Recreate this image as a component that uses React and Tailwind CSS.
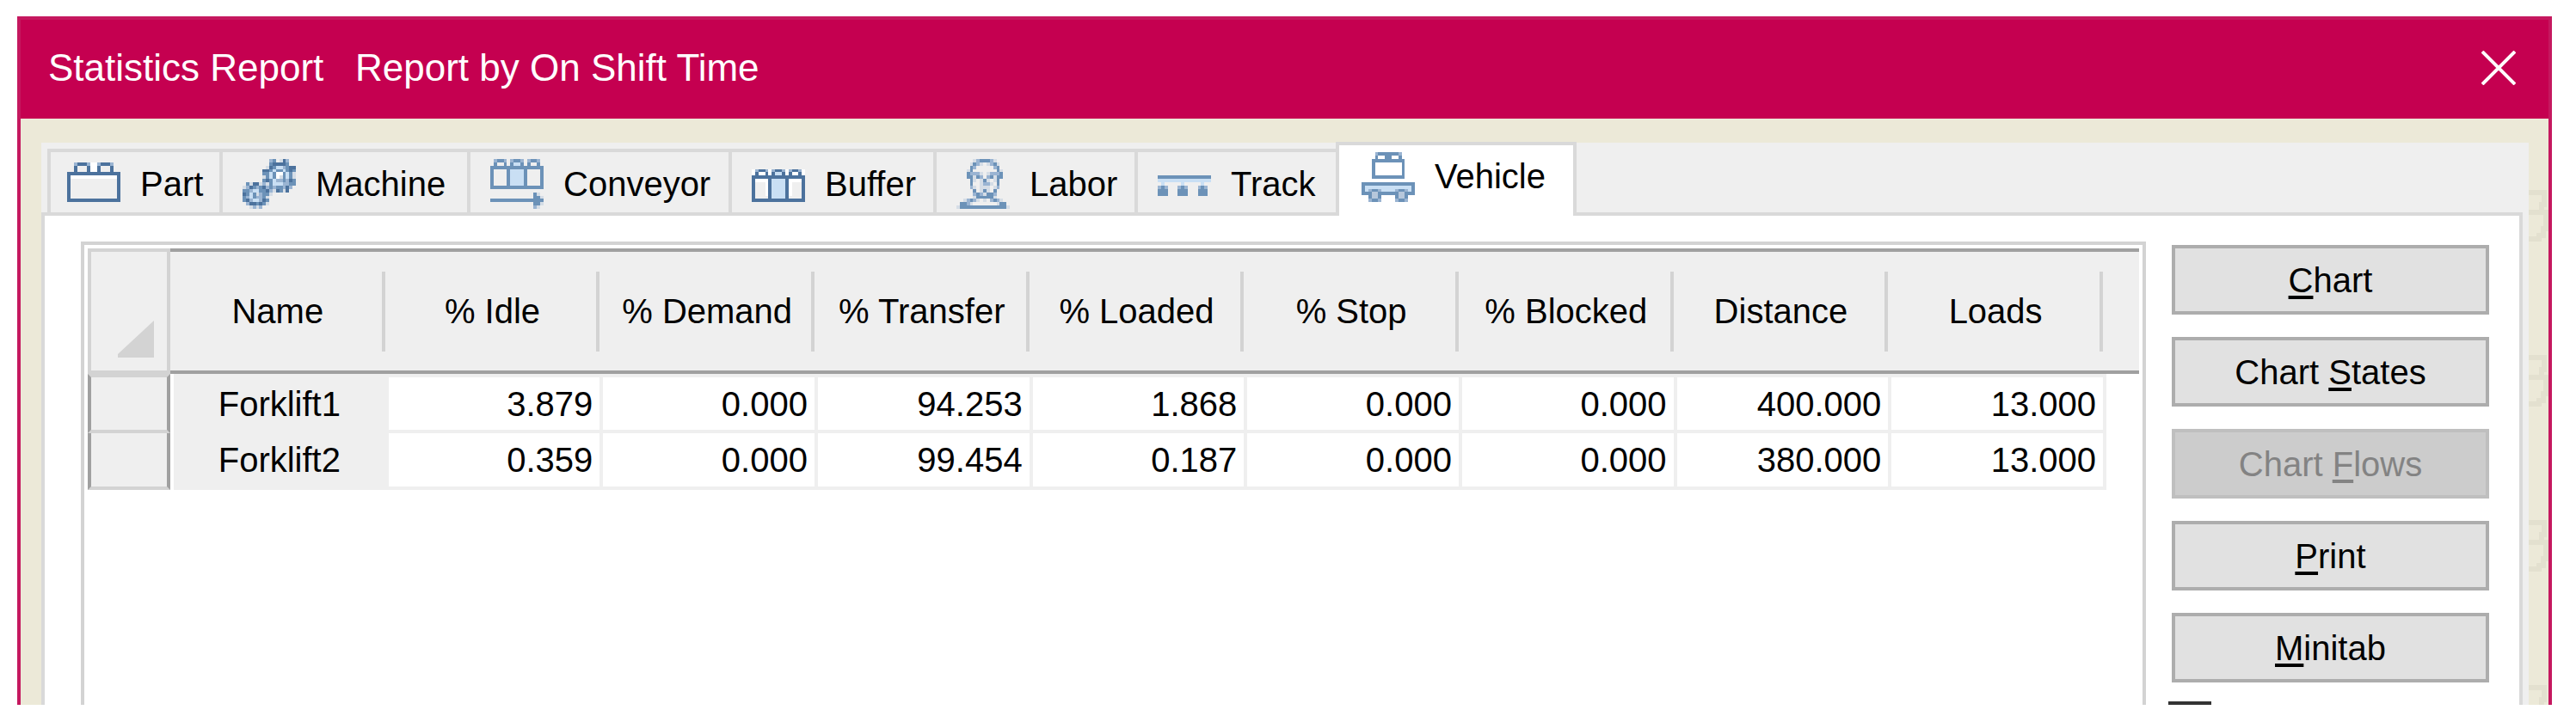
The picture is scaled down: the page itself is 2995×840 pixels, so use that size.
import React from "react"

const palette = {
  D: "#4c729d",
  M: "#6c92b8",
  B: "#9ab4d2",
  L: "#c9dff4",
  G: "#b6c7db",
  g: "#d5dde6",
  W: "#ffffff",
}

// 16 columns each, one letter per pixel
const icons = {
  part: [
    "",
    "..BDDDBWWBDDDB..",
    "..D...DWWD...D..",
    "..D...DWWD...D..",
    "DDDDDDDDDDDDDDDD",
    "DWWWWWWWWWWWWWWD",
    "D..............D",
    "D..............D",
    "D..............D",
    "D..............D",
    "D..............D",
    "D..............D",
    "DDDDDDDDDDDDDDDD",
  ],
  machine: [
    "........BM.gDB..",
    "........MDDDDM..",
    ".......gDMLLBMDD",
    "......DDMLMMLMDM",
    "......MMLMWWMLMg",
    "......gMLMWgMLMg",
    "......MDMLBBMBDM",
    ".MgDDgBgMLLLBBMM",
    "gBDMBMDBMBMMBDB.",
    "MMBLLMMDBgDMgD..",
    "DMLMgBMMg.......",
    "MBLMBBMg........",
    "MDBLLBDM........",
    ".BDDMDMg........",
    "..gBgB..........",
  ],
  conveyor: [
    ".BMMB.BMMB.BMMB.",
    ".M..M.MLLM.M..M.",
    "MMMMMMMMMMMMMMMM",
    "M....MLLLLM....M",
    "M....MLLLLM....M",
    "M....MLLLLM....M",
    "M....MLLLLM....M",
    "M....MLLLLM....M",
    "MMMMMMMMMMMMMMMM",
    "",
    ".............Mg.",
    ".............MMg",
    "MMMMMMMMMMMMMMMM",
    ".............MMg",
    ".............Bg.",
  ],
  buffer: [
    "",
    "",
    "",
    "WBDDBWBDDBWBDDBW",
    "WDWWDWDLLDWDWWDW",
    "DDDDDDDDDDDDDDDD",
    "DWWWWDLLLLDWWWWD",
    "D...WDLLLLDW...D",
    "D...WDLLLLDW...D",
    "D...WDLLLLDW...D",
    "D...WDLLLLDW...D",
    "D....DLLLLD....D",
    "DDDDDDDDDDDDDDDD",
  ],
  labor: [
    ".....gBMMMBg....",
    "....gMBg.gBMg...",
    "....MB.....BM...",
    "...gM.......Mg..",
    "...MBBBg.gBBBM..",
    "...MMgMB.BMgMM..",
    "....Mg.gMg.gM...",
    "....M..gBBg.M...",
    "....Bg.ggg.gB...",
    ".....M.gMg.M....",
    ".....BMBgMMB....",
    ".....gMMMMMg....",
    "..gBMBg.g.BMBg..",
    ".MMBg.......gMM.",
    "gMMMMMMMMMMMMMMg",
  ],
  track: [
    "",
    "",
    "",
    "",
    "",
    "MMMMMMMMMMMMMMMM",
    "LLLLLLLLLLLLLLLL",
    ".L.....L.....L..",
    "BMB...BMB...BMB.",
    "MMM...MMM...MMM.",
    "MMM...MMM...MMM.",
  ],
  vehicle: [
    "....BMMMMMMB....",
    "....MWWMMWWM....",
    "...MMMMMMMMMM...",
    "...MWWWWWWWWM...",
    "...MWWWWWWWWM...",
    "...MWWWWWWWWM...",
    "...MWWWWWWWWM...",
    "...MMMMMMMMMM...",
    "",
    "MMMMMMMMMMMMMMMM",
    "MLLLLLLLLLLLLLLM",
    "MLBMMBLLLLBMMBLM",
    "MMMGGMMMMMMGGMMM",
    "..MGGM....MGGM..",
    "..BMMB....BMMB..",
  ],
}

const PixelIcon = ({ name }) => (
  <svg width="62" height="58" viewBox="0 0 16 15" preserveAspectRatio="none" shapeRendering="crispEdges" className="shrink-0" aria-hidden="true">
    {icons[name].map((row, y) =>
      row.split("").map((c, x) => (c === "." ? null : <rect key={`${x}-${y}`} x={x} y={y} width="1" height="1" fill={palette[c]} />))
    )}
  </svg>
)

const tabs = [
  { icon: "part", label: "Part", className: "w-[200px] pl-[19px]" },
  { icon: "machine", label: "Machine", className: "w-[288px] pl-[23px]" },
  { icon: "conveyor", label: "Conveyor", className: "w-[304px] pl-[23px]" },
  { icon: "buffer", label: "Buffer", className: "w-[238px] pl-[23px]" },
  { icon: "labor", label: "Labor", className: "w-[234px] pl-[23px]" },
  { icon: "track", label: "Track", className: "w-[234px] pl-[23px]" },
]

const columns = ["Name", "% Idle", "% Demand", "% Transfer", "% Loaded", "% Stop", "% Blocked", "Distance", "Loads"]

const rows = [
  ["Forklift1", "3.879", "0.000", "94.253", "1.868", "0.000", "0.000", "400.000", "13.000"],
  ["Forklift2", "0.359", "0.000", "99.454", "0.187", "0.000", "0.000", "380.000", "13.000"],
]

const Key = ({ children }) => <span className="underline decoration-4 underline-offset-4">{children}</span>

const buttonClass =
  "h-[81px] w-full shrink-0 border-4 border-[#adadad] bg-[#e1e1e1] text-black disabled:border-[#bfbfbf] disabled:bg-[#cccccc] disabled:text-[#838383]"

const Watermark = () => (
  <svg width="23" height="61" viewBox="0 0 23 61" shapeRendering="crispEdges" className="shrink-0" fill="none" stroke="#e3e0cf" strokeWidth="6" aria-hidden="true">
    <path d="M0 4H18V18H15V27H0M15 27H20V46H17V54H12V58H0" />
  </svg>
)

const StatsTable = () => (
  <table className="w-full table-fixed border-separate border-spacing-0">
    <colgroup>
      <col className="w-[100px]" />
      {columns.map((c) => (
        <col key={c} />
      ))}
      <col className="w-[38px]" />
    </colgroup>
    <thead>
      <tr className="h-[146px]">
        <td className="bg-[#efefef] p-0">
          <div className="flex h-[146px]">
            <div className="flex w-24 items-end justify-end border-4 border-[#d3d3d3] pb-[15px] pr-[15px]">
              <svg width="42" height="43" viewBox="0 0 42 43" aria-hidden="true">
                <path d="M42 0V43H0V39Z" fill="#d3d3d3" />
              </svg>
            </div>
            <div className="w-1 border-y-4 border-[#a0a0a0]" />
          </div>
        </td>
        {columns.map((c) => (
          <th key={c} scope="col" className="border-y-4 border-[#a0a0a0] bg-[#efefef] p-0 font-normal">
            <div className="mr-1 flex h-[93px] items-center justify-center whitespace-nowrap border-r-4 border-[#d3d3d3]">{c}</div>
          </th>
        ))}
        <td className="border-y-4 border-[#a0a0a0] bg-[#efefef]" />
      </tr>
    </thead>
    <tbody>
      {rows.map((row, i) => (
        <tr key={row[0]}>
          <td className="p-0">
            <div
              className={`w-24 border-x-4 border-b-4 border-x-[#a0a0a0] border-b-[#d3d3d3] bg-[#efefef] ${
                i === 0 ? "h-[69px] border-t-4 border-t-[#d3d3d3]" : "h-[66px]"
              }`}
            />
          </td>
          {row.map((value, j) =>
            j === 0 ? (
              <th key={j} scope="row" className={`border-b-4 border-[#efefef] bg-[#efefef] p-0 pr-1 font-normal ${i === 0 ? "border-t-4" : ""}`}>
                {value}
              </th>
            ) : (
              <td
                key={j}
                className={`border-b-4 border-r-4 border-[#efefef] bg-white p-0 pr-2 text-right ${i === 0 ? "border-t-4" : ""}`}
              >
                {value}
              </td>
            )
          )}
          <td />
        </tr>
      ))}
    </tbody>
  </table>
)

const App = () => {
  return (
    <div className="h-screen overflow-hidden bg-white pb-5 pl-5 pr-7 pt-[19px] font-['Liberation_Sans',Arial,sans-serif] text-[40px] leading-[56px] text-black">
      <div className="flex h-full flex-col overflow-hidden border-x-4 border-t-4 border-[#c5185f] bg-[#ece9d8]">
        <header className="flex h-[115px] shrink-0 items-center justify-between bg-[#c50050] pb-1 pl-8 pr-[38px] text-white">
          <h1 className="whitespace-pre text-[44px]">Statistics Report   Report by On Shift Time</h1>
          <button type="button" aria-label="Close">
            <svg width="40" height="40" viewBox="0 0 40 40" stroke="#fff" strokeWidth="4" aria-hidden="true">
              <path d="M1 1L39 39M39 1L1 39" />
            </svg>
          </button>
        </header>

        <div className="flex min-h-0 flex-1 pl-6 pt-7">
          <main className="flex min-w-0 flex-1 flex-col bg-[#efefef]">
            <div role="tablist" className="flex h-[81px] shrink-0 items-end pl-[7px]">
              {tabs.map((t) => (
                <button
                  key={t.label}
                  type="button"
                  role="tab"
                  aria-selected="false"
                  className={`flex h-[74px] shrink-0 items-center gap-[23px] border-l-4 border-t-4 border-[#d9d9d9] pt-1 ${t.className}`}
                >
                  <PixelIcon name={t.icon} />
                  {t.label}
                </button>
              ))}
              <button
                type="button"
                role="tab"
                aria-selected="true"
                className="relative -mb-1 flex h-[86px] w-[280px] shrink-0 items-start gap-[23px] border-x-4 border-t-4 border-[#d9d9d9] bg-white pl-[26px] pt-2"
              >
                <PixelIcon name="vehicle" />
                Vehicle
              </button>
            </div>

            <div role="tabpanel" className="mr-[7px] flex min-h-0 flex-1 gap-[30px] border-x-4 border-t-4 border-[#d9d9d9] bg-white pl-[42px] pr-[35px] pt-[30px]">
              <div className="min-w-0 flex-1 border-x-4 border-t-4 border-[#d3d3d3] px-1 pt-1">
                <StatsTable />
              </div>

              <div className="flex w-[369px] shrink-0 flex-col gap-[26px] pt-1">
                <button type="button" className={buttonClass}>
                  <Key>C</Key>hart
                </button>
                <button type="button" className={buttonClass}>
                  Chart <Key>S</Key>tates
                </button>
                <button type="button" disabled className={buttonClass}>
                  Chart <Key>F</Key>lows
                </button>
                <button type="button" className={buttonClass}>
                  <Key>P</Key>rint
                </button>
                <button type="button" className={buttonClass}>
                  <Key>M</Key>initab
                </button>
                <input type="checkbox" aria-label="Report option" className="-ml-1 -mt-1 size-[50px] shrink-0 appearance-none border-4 border-[#333333] bg-white" />
              </div>
            </div>
          </main>

          <aside className="flex w-[23px] shrink-0 flex-col gap-[131px] overflow-hidden pt-[54px]">
            <Watermark />
            <Watermark />
            <Watermark />
            <Watermark />
          </aside>
        </div>
      </div>
    </div>
  )
}

export default App
